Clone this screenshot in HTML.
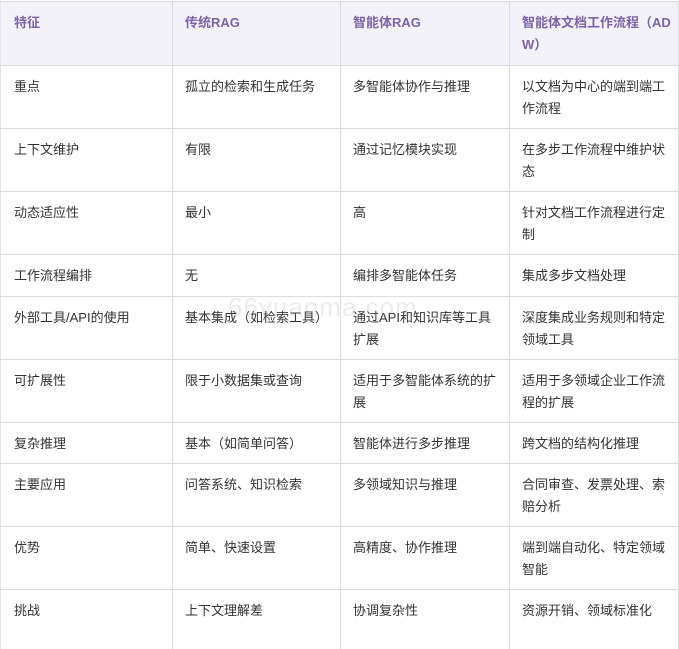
<!DOCTYPE html>
<html><head><meta charset="utf-8"><style>
body{margin:0;width:679px;height:628px;overflow:hidden;background:#fff;font-family:"Liberation Sans","Noto Sans CJK SC",sans-serif;font-size:13px;color:#333;position:relative}
.r{position:absolute;left:0;width:679px;border-top:1px solid #dcdce4;box-sizing:border-box}
.c{position:absolute;top:0;bottom:0;box-sizing:border-box;padding:10px 4px 0 12px;line-height:22px;border-left:1px solid #dcdce4;word-break:break-all}
.c:nth-child(1){left:0;width:172px;border-left:1px solid #e4e4ea;padding-left:13px}
.c:nth-child(2){left:172px;width:168px}
.c:nth-child(3){left:340px;width:169px;padding-right:12px}
.c:nth-child(4){left:509px;width:170px;border-right:1px solid #dcdce4}
.h{background:#f3f2f8;color:#7d63a8;font-weight:bold}
.wm{position:absolute;left:228px;top:292px;font-size:26px;color:rgba(150,150,150,.18);letter-spacing:1px}
</style></head><body>
<div class="r h" style="top:1px;height:64px"><div class="c">特征</div><div class="c">传统RAG</div><div class="c">智能体RAG</div><div class="c">智能体文档工作流程（ADW）</div></div>
<div class="r" style="top:65px;height:63px"><div class="c">重点</div><div class="c">孤立的检索和生成任务</div><div class="c">多智能体协作与推理</div><div class="c">以文档为中心的端到端工作流程</div></div>
<div class="r" style="top:128px;height:63px"><div class="c">上下文维护</div><div class="c">有限</div><div class="c">通过记忆模块实现</div><div class="c">在多步工作流程中维护状态</div></div>
<div class="r" style="top:191px;height:63px"><div class="c">动态适应性</div><div class="c">最小</div><div class="c">高</div><div class="c">针对文档工作流程进行定制</div></div>
<div class="r" style="top:254px;height:42px"><div class="c">工作流程编排</div><div class="c">无</div><div class="c">编排多智能体任务</div><div class="c">集成多步文档处理</div></div>
<div class="r" style="top:296px;height:63px"><div class="c">外部工具/API的使用</div><div class="c">基本集成（如检索工具）</div><div class="c">通过API和知识库等工具扩展</div><div class="c">深度集成业务规则和特定领域工具</div></div>
<div class="r" style="top:359px;height:63px"><div class="c">可扩展性</div><div class="c">限于小数据集或查询</div><div class="c">适用于多智能体系统的扩展</div><div class="c">适用于多领域企业工作流程的扩展</div></div>
<div class="r" style="top:422px;height:41px"><div class="c">复杂推理</div><div class="c">基本（如简单问答）</div><div class="c">智能体进行多步推理</div><div class="c">跨文档的结构化推理</div></div>
<div class="r" style="top:463px;height:63px"><div class="c">主要应用</div><div class="c">问答系统、知识检索</div><div class="c">多领域知识与推理</div><div class="c">合同审查、发票处理、索赔分析</div></div>
<div class="r" style="top:526px;height:63px"><div class="c">优势</div><div class="c">简单、快速设置</div><div class="c">高精度、协作推理</div><div class="c">端到端自动化、特定领域智能</div></div>
<div class="r" style="top:589px;height:60px"><div class="c">挑战</div><div class="c">上下文理解差</div><div class="c">协调复杂性</div><div class="c">资源开销、领域标准化</div></div>
<div class="wm">66yuanma.com</div>
</body></html>
